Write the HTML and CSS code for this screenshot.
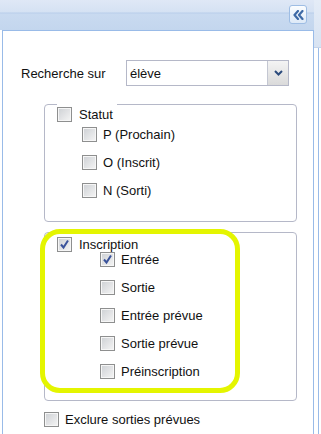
FILE: index.html
```html
<!DOCTYPE html>
<html lang="fr">
<head>
    <meta charset="UTF-8">
    <title>Recherche</title>
    <link rel="stylesheet" href="styles.css">
</head>
<body>
    <div class="app">
        <div class="panel">
            <div class="panel-head">
                <button class="collapse-btn" title="Réduire">
                    <svg width="11" height="10" viewBox="0 0 11 10">
                        <path d="M5 1 L1.5 5 L5 9 M9.5 1 L6 5 L9.5 9" fill="none" stroke="#3e6aa6" stroke-width="2.2" stroke-linejoin="round" stroke-linecap="round"/>
                    </svg>
                </button>
            </div>
            <div class="panel-body">
                <div class="search-row">
                    <label class="search-label">Recherche sur</label>
                    <div class="combo">
                        <span class="combo-text">élève</span>
                        <span class="combo-trigger">
                            <svg width="9" height="6" viewBox="0 0 9 6">
                                <path d="M1 1 L4.5 4.5 L8 1" fill="none" stroke="#2c4b7c" stroke-width="2"/>
                            </svg>
                        </span>
                    </div>
                </div>

                <div class="group group-statut">
                    <div class="legend">
                        <span class="cb"></span>
                        <span class="legend-text">Statut</span>
                    </div>
                    <div class="list">
                        <div class="row"><span class="cb"></span><span>P (Prochain)</span></div>
                        <div class="row"><span class="cb"></span><span>O (Inscrit)</span></div>
                        <div class="row"><span class="cb"></span><span>N (Sorti)</span></div>
                    </div>
                </div>

                <div class="group group-inscription">
                    <div class="highlight"></div>
                    <div class="legend">
                        <span class="cb checked">
                            <svg width="11" height="11" viewBox="0 0 11 11"><path d="M2 5.5 L4.5 8.5 L9 1.5" fill="none" stroke="#3a539b" stroke-width="2"/></svg>
                        </span>
                        <span class="legend-text">Inscription</span>
                    </div>
                    <div class="list">
                        <div class="row">
                            <span class="cb checked">
                                <svg width="11" height="11" viewBox="0 0 11 11"><path d="M2 5.5 L4.5 8.5 L9 1.5" fill="none" stroke="#3a539b" stroke-width="2"/></svg>
                            </span>
                            <span>Entrée</span>
                        </div>
                        <div class="row"><span class="cb"></span><span>Sortie</span></div>
                        <div class="row"><span class="cb"></span><span>Entrée prévue</span></div>
                        <div class="row"><span class="cb"></span><span>Sortie prévue</span></div>
                        <div class="row"><span class="cb"></span><span>Préinscription</span></div>
                    </div>
                </div>

                <div class="row exclude-row"><span class="cb"></span><span>Exclure sorties prévues</span></div>
            </div>
        </div>
        <div class="side">
            <div class="side-head"></div>
            <div class="side-body"></div>
        </div>
    </div>
</body>
</html>
```

FILE: styles.css
```css
body {
    margin: 0;
    font-family: "Liberation Sans", Arial, sans-serif;
    font-size: 13px;
    color: #111;
    background: #fff;
}
.app {
    display: flex;
    height: 434px;
    overflow: hidden;
}
.panel {
    width: 314px;
    display: flex;
    flex-direction: column;
}
.panel-head {
    height: 30px;
    display: flex;
    justify-content: flex-end;
    align-items: flex-start;
    padding-right: 7px;
    background: linear-gradient(#dfe8f6 0, #d5e2f3 12px, #b8cdea 13px, #c9daf0 14px, #c3d6ee 30px);
}
.collapse-btn {
    width: 18px;
    height: 19px;
    margin-top: 5px;
    padding: 0;
    border: 1px solid #9ebde4;
    border-radius: 3px;
    background: linear-gradient(#fbfdff, #dde9f7);
    display: flex;
    align-items: center;
    justify-content: center;
}
.panel-body {
    flex: 1;
    margin-left: 2px;
    border: 1px solid #99bbe8;
    border-bottom: none;
    background: #fff;
}
.search-row {
    display: flex;
    align-items: center;
    padding: 29px 0 0 18px;
}
.search-label {
    width: 105px;
}
.combo {
    width: 163px;
    height: 26px;
    box-sizing: border-box;
    border: 1px solid #b5b8c8;
    display: flex;
    align-items: center;
}
.combo-text {
    flex: 1;
    padding-left: 3px;
}
.combo-trigger {
    width: 20px;
    height: 24px;
    border-left: 1px solid #c4c7d2;
    background: linear-gradient(#f4f4f4, #dadada);
    display: flex;
    align-items: center;
    justify-content: center;
}
.group {
    position: relative;
    width: 253px;
    box-sizing: border-box;
    margin-left: 41px;
    border: 1px solid #b5b8c8;
    border-radius: 4px;
}
.group-statut {
    margin-top: 18px;
    padding-bottom: 17px;
}
.group-inscription {
    margin-top: 10px;
    padding-bottom: 15px;
}
.legend {
    display: flex;
    width: fit-content;
    align-items: center;
    gap: 7px;
    height: 16px;
    margin: -1px 0 0 12px;
    padding: 2px 4px 0 0;
    background: #fff;
}
.group-inscription .legend {
    padding-top: 4px;
}
.list {
    margin-top: -2px;
    padding-left: 37px;
}
.group-inscription .list {
    margin-top: -7px;
    padding-left: 55px;
}
.row {
    display: flex;
    align-items: center;
    gap: 6px;
    height: 28px;
}
.exclude-row {
    margin: 10px 0 0 41px;
    height: 16px;
}
.cb {
    width: 15px;
    height: 15px;
    box-sizing: border-box;
    flex: none;
    border: 1px solid #8e8f8f;
    box-shadow: inset 0 0 0 1px #f6f6f6;
    background: linear-gradient(135deg, #cdd0d4, #f5f5f5);
    display: flex;
    align-items: center;
    justify-content: center;
}
.highlight {
    position: absolute;
    left: -5px;
    top: -4px;
    width: 200px;
    height: 164px;
    box-sizing: border-box;
    border: 5px solid #e4f500;
    border-radius: 20px;
    pointer-events: none;
}
.side {
    flex: 1;
    display: flex;
    flex-direction: column;
}
.side-head {
    height: 47px;
    background: linear-gradient(#e4ecf7, #d8e3f2);
    border-bottom: 1px solid #c5d4ea;
}
.side-body {
    flex: 1;
    margin-left: 4px;
    border-left: 1px solid #99bbe8;
}
```
